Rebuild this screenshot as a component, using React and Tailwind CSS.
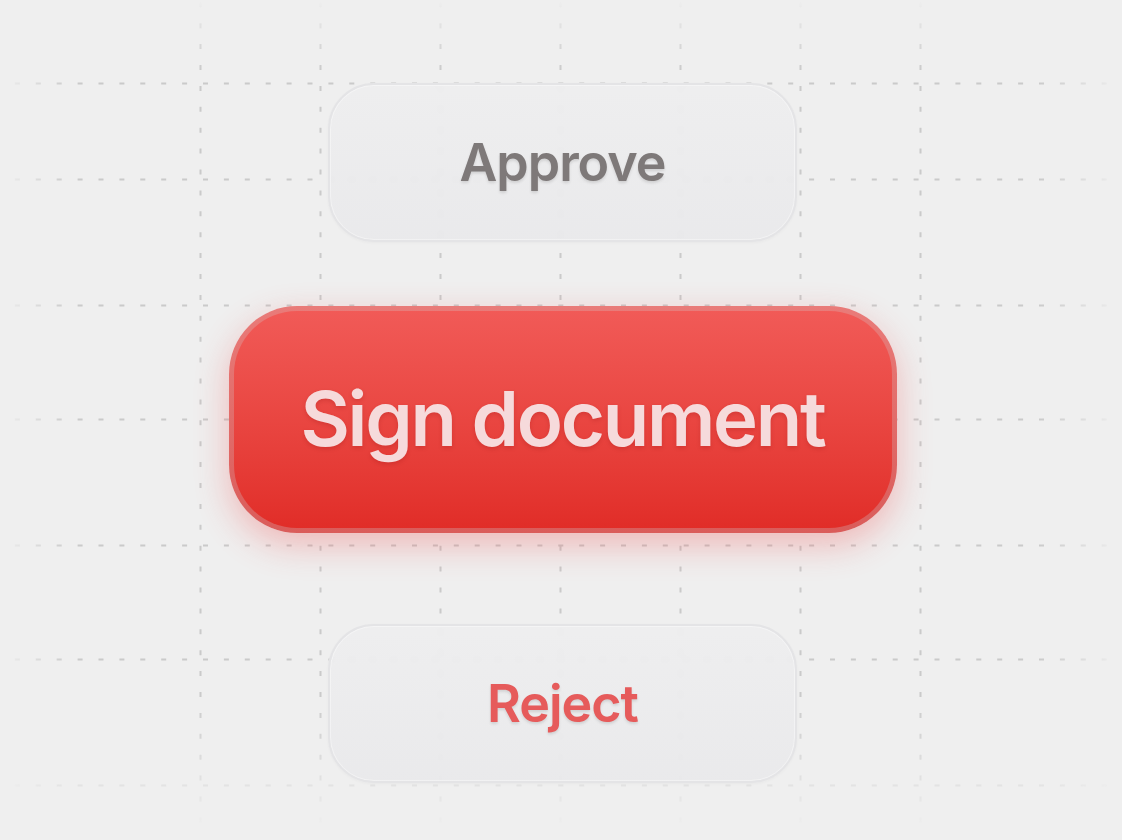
import React from 'react';

const GRID_X = [200.5, 320.5, 440.5, 560.5, 680.5, 800.5, 920.5];
const GRID_Y = [83.5, 179.5, 305.5, 419.5, 545.5, 659.5, 785.5];

// dashed guide lines behind the buttons, faded out at the edges
function GridBackdrop() {
  return (
    <svg className="absolute inset-0 pointer-events-none" width="1122" height="840" viewBox="0 0 1122 840">
      <defs>
        <linearGradient id="fadeX" x1="0" y1="0" x2="1122" y2="0" gradientUnits="userSpaceOnUse">
          <stop offset="0" stopColor="#fff" stopOpacity="0" />
          <stop offset="0.065" stopColor="#fff" stopOpacity="1" />
          <stop offset="0.925" stopColor="#fff" stopOpacity="1" />
          <stop offset="1" stopColor="#fff" stopOpacity="0" />
        </linearGradient>
        <linearGradient id="fadeY" x1="0" y1="0" x2="0" y2="840" gradientUnits="userSpaceOnUse">
          <stop offset="0" stopColor="#fff" stopOpacity="0" />
          <stop offset="0.085" stopColor="#fff" stopOpacity="1" />
          <stop offset="0.83" stopColor="#fff" stopOpacity="1" />
          <stop offset="0.985" stopColor="#fff" stopOpacity="0" />
        </linearGradient>
        <mask id="maskX" maskUnits="userSpaceOnUse" x="0" y="0" width="1122" height="840">
          <rect width="1122" height="840" fill="url(#fadeX)" />
        </mask>
        <mask id="maskY" maskUnits="userSpaceOnUse" x="0" y="0" width="1122" height="840">
          <rect width="1122" height="840" fill="url(#fadeY)" />
        </mask>
      </defs>
      <g mask="url(#maskX)">
        <g mask="url(#maskY)" stroke="#cacaca" strokeWidth="2" strokeDasharray="5 15.9">
          {GRID_X.map((x) => (
            <line key={'v' + x} x1={x} y1="0" x2={x} y2="840" strokeDashoffset="18.6" />
          ))}
          {GRID_Y.map((y) => (
            <line key={'h' + y} x1="0" y1={y} x2="1122" y2={y} strokeDashoffset="6" />
          ))}
        </g>
      </g>
    </svg>
  );
}

function SoftButton({ children, textClass }) {
  return (
    <button className="w-[469px] h-[159px] rounded-[46px] border-2 border-[#e4e4e6] bg-gradient-to-b from-[#eeeeef]/90 to-[#e9e9eb]/90 backdrop-blur-[2px] shadow-[inset_0_0_0_1px_rgba(255,255,255,0.4),0_1px_3px_rgba(0,0,0,0.03)] flex items-center justify-center">
      <span className={'text-[52px] leading-none font-semibold tracking-[-0.02em] [text-shadow:0_2px_3px_rgba(0,0,0,0.12)] ' + textClass}>
        {children}
      </span>
    </button>
  );
}

export default function App() {
  return (
    <div className="relative w-[1122px] h-[840px] overflow-hidden bg-[#efefef] font-['Inter','Noto_Sans',sans-serif]">
      <GridBackdrop />

      <div className="relative flex flex-col items-center pt-[83px] pl-[3px]">
        <SoftButton textClass="text-[#7e7979]">Approve</SoftButton>

        <div className="mt-[64px] w-[668px] h-[227px] rounded-[68px] p-[5px] bg-gradient-to-b from-[#e97b79] to-[#da5c5a] shadow-[0_12px_34px_rgba(239,68,68,0.32)]">
          <button className="w-full h-full rounded-[63px] bg-gradient-to-b from-[#f15a57] to-[#e12d28] flex items-center justify-center">
            <span className="text-[76px] leading-none font-semibold tracking-[-0.03em] text-[#f6dadb] pb-[3px] [text-shadow:0_2px_4px_rgba(120,0,0,0.18)]">
              Sign document
            </span>
          </button>
        </div>

        <div className="mt-[91px]">
          <SoftButton textClass="text-[#e65b5b]">Reject</SoftButton>
        </div>
      </div>
    </div>
  );
}
